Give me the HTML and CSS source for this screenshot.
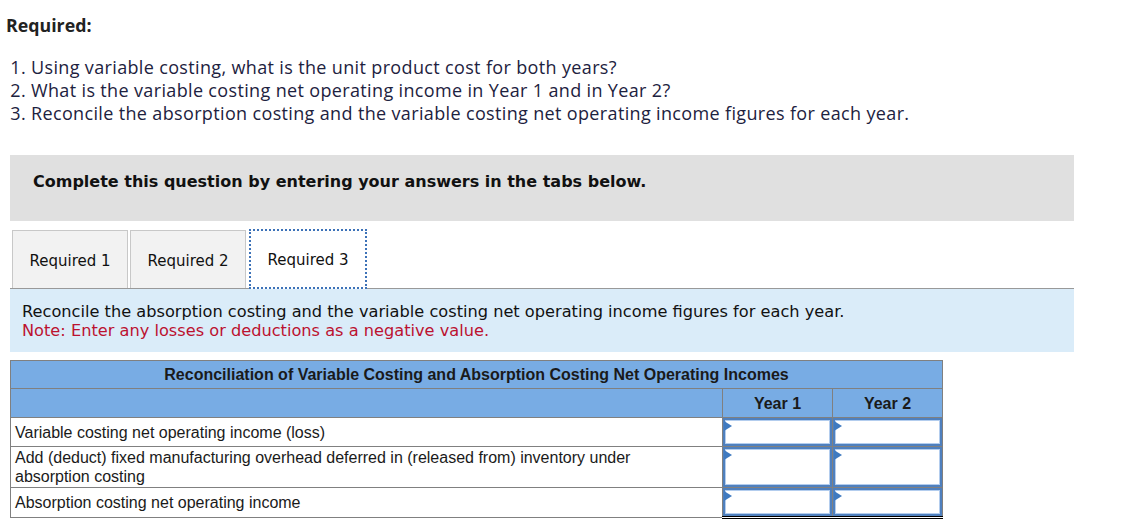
FILE: index.html
```html
<!DOCTYPE html>
<html>
<head>
<meta charset="utf-8">
<link rel="stylesheet" href="styles.css">
</head>
<body>
<div class="page">
  <h1 class="req-title">Required:</h1>
  <ol class="req-list">
    <li>Using variable costing, what is the unit product cost for both years?</li>
    <li>What is the variable costing net operating income in Year 1 and in Year 2?</li>
    <li>Reconcile the absorption costing and the variable costing net operating income figures for each year.</li>
  </ol>
  <div class="banner">Complete this question by entering your answers in the tabs below.</div>
  <div class="tabs">
    <div class="tab">Required 1</div>
    <div class="tab">Required 2</div>
    <div class="tab active">Required 3</div>
  </div>
  <div class="instructions">
    <div>Reconcile the absorption costing and the variable costing net operating income figures for each year.</div>
    <div class="note">Note: Enter any losses or deductions as a negative value.</div>
  </div>
  <table class="recon">
    <colgroup>
      <col class="c-label">
      <col class="c-year">
      <col class="c-year">
    </colgroup>
    <tr class="title-row"><th colspan="3">Reconciliation of Variable Costing and Absorption Costing Net Operating Incomes</th></tr>
    <tr class="year-row"><th></th><th>Year 1</th><th>Year 2</th></tr>
    <tr class="r1"><td class="label">Variable costing net operating income (loss)</td><td class="in"><div class="box"></div></td><td class="in"><div class="box"></div></td></tr>
    <tr class="r2"><td class="label">Add (deduct) fixed manufacturing overhead deferred in (released from) inventory under absorption costing</td><td class="in"><div class="box"></div></td><td class="in"><div class="box"></div></td></tr>
    <tr class="r3 total"><td class="label">Absorption costing net operating income</td><td class="in"><div class="box"></div></td><td class="in"><div class="box"></div></td></tr>
  </table>
</div>
</body>
</html>
```
FILE: styles.css
```css
html, body { margin: 0; padding: 0; background: #fff; }
.page { color: #1b1b1b; }
.req-title {
  font-family: "Open Sans", sans-serif;
  font-weight: 700;
  font-size: 17.8px;
  margin: 0;
  padding: 14px 0 0 6px;
  line-height: 22px;
  color: #222;
}
.req-list {
  font-family: "Open Sans", sans-serif;
  font-size: 18px;
  letter-spacing: 0.35px;
  line-height: 23px;
  margin: 20px 0 0 0;
  padding: 0 0 0 31px;
  color: #1d2240;
}
.banner {
  margin: 30px 0 0 10px;
  width: 1064px;
  height: 66px;
  box-sizing: border-box;
  background: #e0e0e0;
  font-family: "DejaVu Sans", sans-serif;
  font-weight: 700;
  font-size: 16px;
  color: #111;
  padding: 17px 0 0 23px;
  line-height: 20px;
}
.tabs {
  display: flex;
  margin: 9px 0 0 10px;
  width: 1064px;
  height: 59px;
  box-sizing: border-box;
  border-bottom: 1px solid #999;
  padding-left: 2px;
  gap: 2px;
  align-items: flex-end;
}
.tab {
  width: 116px;
  height: 58px;
  box-sizing: border-box;
  background: #f2f2f2;
  border: 1px solid #c8c8c8;
  border-bottom: none;
  font-family: "DejaVu Sans", sans-serif;
  font-size: 15px;
  color: #111;
  display: flex;
  align-items: center;
  justify-content: center;
  padding-top: 2px;
}
.tab.active {
  background: #fff;
  width: 118px;
  height: 60px;
  margin-bottom: -1px;
  margin-left: 1px;
  border: 2px dotted #3d72b8;
}
.instructions {
  margin: 0 0 0 10px;
  width: 1064px;
  height: 63px;
  box-sizing: border-box;
  background: #daecf9;
  font-family: "DejaVu Sans", sans-serif;
  font-size: 16.2px;
  line-height: 19px;
  padding: 13px 0 0 12px;
  color: #111;
}
.note { color: #bc1230; }
.recon {
  margin: 8px 0 0 10px;
  border-collapse: collapse;
  width: 933px;
  font-family: "Liberation Sans", Arial, sans-serif;
  font-size: 16px;
  color: #1a1a1a;
  table-layout: fixed;
}
.c-label { width: 712px; }
.c-year { width: 110px; }
.recon th {
  background: #78ace4;
  border: 1px solid #808080;
  font-weight: 700;
  padding: 0;
  color: #1a1a1a;
}
.title-row th { height: 27px; }
.year-row th { height: 27px; padding-top: 1px; }
.recon td {
  border: 1px solid #808080;
  padding: 0;
}
.recon td.label { padding: 0 70px 0 4px; line-height: 19px; vertical-align: middle; }
.r1 td { height: 28px; }
.r2 td { height: 40px; }
.r3 td { height: 28px; }
.recon td.in { padding: 0; vertical-align: top; }
.box {
  position: relative;
  box-sizing: border-box;
  border: 2px solid #4f80be;
  box-shadow: inset 0 0 0 1px #b3cdee;
  background: #fff;
}
.r1 .box { height: 28px; }
.r2 .box { height: 40px; }
.r3 .box { height: 28px; }
.box::before {
  content: "";
  position: absolute;
  left: -1px;
  top: 1px;
  border-left: 8px solid #3f7ac0;
  border-top: 5px solid transparent;
  border-bottom: 5px solid transparent;
}
.total td.in { border-bottom: 3px double #000; }
```
